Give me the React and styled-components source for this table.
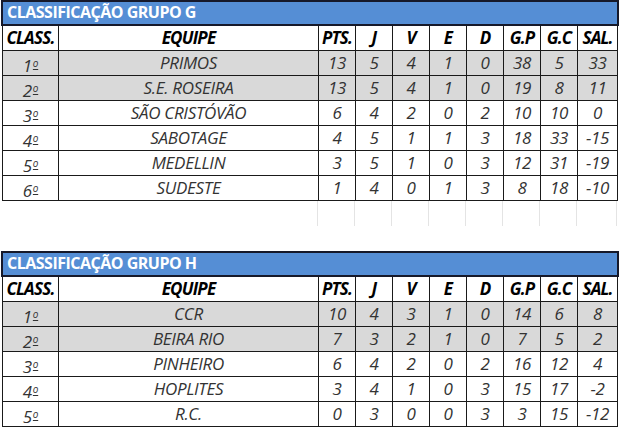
import React, { Fragment } from 'react';
import styled, { createGlobalStyle } from 'styled-components';

const GlobalStyle = createGlobalStyle`
  body {
    margin: 0;
    background: #ffffff;
    font-family: "Open Sans", Lato, sans-serif;
  }
`

const COLS = '56px 260px repeat(7, 37px) 40px';

const Page = styled.div`
  width: 620px;
  display: flex;
  flex-direction: column;
`

const Group = styled.section`
  display: flex;
  flex-direction: column;
`

const Title = styled.div`
  margin-left: 1px;
  width: 618px;
  height: 26px;
  box-sizing: border-box;
  border: 2px solid #16192a;
  background: #558ed5;
  color: #ffffff;
  font-weight: 700;
  font-size: 16px;
  line-height: 21px;
  padding-left: 4px;
  letter-spacing: -0.5px;
`

const Grid = styled.div`
  margin-left: 2px;
  display: grid;
  grid-template-columns: ${COLS};
  border-left: 1px solid #1a1a1a;
  width: 617px;
  box-sizing: border-box;
`

const Cell = styled.div`
  height: 25px;
  box-sizing: border-box;
  border-right: 1px solid #1a1a1a;
  border-bottom: 1px solid #1a1a1a;
  background: ${p => (p.$hl ? '#d9d9d9' : '#ffffff')};
  color: ${p => (p.$head ? '#000000' : '#333333')};
  font-style: italic;
  font-weight: ${p => (p.$head ? 700 : 400)};
  font-size: 17px;
  line-height: 24px;
  letter-spacing: ${p => (p.$head ? '-0.8px' : '-0.3px')};
  text-align: center;
  white-space: nowrap;
  overflow: hidden;
`

const Ordinal = styled.span`
  font-size: 10px;
  vertical-align: 5px;
  text-decoration: underline;
  text-underline-offset: 2px;
  margin-left: 1px;
`

const Blank = styled.div`
  margin-left: 2px;
  display: grid;
  grid-template-columns: ${COLS};
  height: 50px;
`

const Faint = styled.div`
  height: 25px;
  border-right: ${p => (p.$line ? '1px solid #e4e4e4' : 'none')};
`

const headers = ['CLASS.', 'EQUIPE', 'PTS.', 'J', 'V', 'E', 'D', 'G.P', 'G.C', 'SAL.'];

const groupG = [
  [1, 'PRIMOS', 13, 5, 4, 1, 0, 38, 5, 33],
  [2, 'S.E. ROSEIRA', 13, 5, 4, 1, 0, 19, 8, 11],
  [3, 'SÃO CRISTÓVÃO', 6, 4, 2, 0, 2, 10, 10, 0],
  [4, 'SABOTAGE', 4, 5, 1, 1, 3, 18, 33, -15],
  [5, 'MEDELLIN', 3, 5, 1, 0, 3, 12, 31, -19],
  [6, 'SUDESTE', 1, 4, 0, 1, 3, 8, 18, -10],
];

const groupH = [
  [1, 'CCR', 10, 4, 3, 1, 0, 14, 6, 8],
  [2, 'BEIRA RIO', 7, 3, 2, 1, 0, 7, 5, 2],
  [3, 'PINHEIRO', 6, 4, 2, 0, 2, 16, 12, 4],
  [4, 'HOPLITES', 3, 4, 1, 0, 3, 15, 17, -2],
  [5, 'R.C.', 0, 3, 0, 0, 3, 3, 15, -12],
];

function Standings({ title, rows }) {
  return (
    <Group>
      <Title>{title}</Title>
      <Grid>
        {headers.map(h => (
          <Cell key={h} $head>{h}</Cell>
        ))}
        {rows.map((row, i) => (
          <Fragment key={row[1]}>
            {row.map((v, j) => (
              <Cell key={j} $hl={i < 2}>
                {v}
                {j === 0 && <Ordinal>o</Ordinal>}
              </Cell>
            ))}
          </Fragment>
        ))}
      </Grid>
    </Group>
  );
}

export default function App() {
  return (
    <Page>
      <GlobalStyle />
      <Standings title="CLASSIFICAÇÃO GRUPO G" rows={groupG} />
      <Blank>
        {headers.map((h, j) => (
          <Faint key={h} $line={j >= 1} />
        ))}
      </Blank>
      <Standings title="CLASSIFICAÇÃO GRUPO H" rows={groupH} />
    </Page>
  );
}
